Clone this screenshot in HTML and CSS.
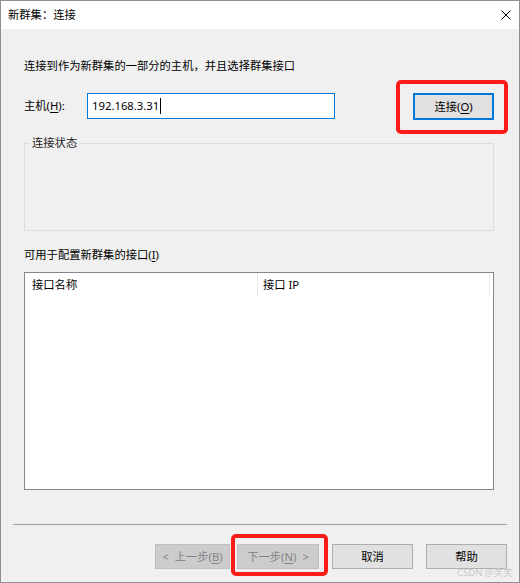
FILE: index.html
```html
<!DOCTYPE html>
<html lang="zh-CN">
<head>
<meta charset="utf-8">
<title>新群集：连接</title>
<link rel="stylesheet" href="styles.css">
</head>
<body>
<div class="window">
  <div class="titlebar">
    <span class="title">新群集：连接</span>
    <svg class="close" width="10" height="10" viewBox="0 0 10 10"><path d="M0.5 0.5 L9.5 9.5 M9.5 0.5 L0.5 9.5" stroke="#000" stroke-width="1" fill="none"/></svg>
  </div>
  <div class="content">
    <div class="intro">连接到作为新群集的一部分的主机，并且选择群集接口</div>
    <div class="host-row">
      <span class="host-label">主机(<u>H</u>):</span>
      <div class="textbox">192.168.3.31<span class="caret"></span></div>
      <div class="spacer"></div>
      <button class="btn btn-default">连接(<u>O</u>)</button>
    </div>
    <fieldset class="group">
      <legend>连接状态</legend>
    </fieldset>
    <div class="list-label">可用于配置新群集的接口(<u>I</u>)</div>
    <div class="listview">
      <div class="list-header">
        <div class="col col-name">接口名称</div>
        <div class="col col-ip">接口 IP</div>
      </div>
    </div>
  </div>
  <div class="footer">
    <div class="separator"></div>
    <div class="buttons">
      <button class="btn btn-disabled btn-back"><span class="arrow">&lt;</span>上一步(<u>B</u>)</button>
      <button class="btn btn-disabled btn-next">下一步(<u>N</u>)<span class="arrow arrow-r">&gt;</span></button>
      <button class="btn btn-normal">取消</button>
      <button class="btn btn-normal">帮助</button>
    </div>
  </div>
  <div class="mark mark-connect"></div>
  <div class="mark mark-next"></div>
  <div class="watermark">CSDN @笑笑</div>
</div>
</body>
</html>
```
FILE: styles.css
```css
html, body {
  margin: 0;
  padding: 0;
  background: #ffffff;
}
body {
  width: 520px;
  height: 583px;
  overflow: hidden;
}
.window {
  position: relative;
  box-sizing: border-box;
  width: 520px;
  height: 583px;
  border: 1px solid #8f8f8f;
  background: #f0f0f0;
  display: flex;
  flex-direction: column;
  font-family: "Noto Sans", "Noto Sans CJK SC", sans-serif;
  font-size: 11.3px;
  line-height: 16px;
  color: #000;
}
u {
  text-decoration: underline;
  text-underline-offset: 2px;
}
.titlebar {
  height: 28px;
  flex: none;
  background: #ffffff;
  display: flex;
  align-items: center;
  justify-content: space-between;
  padding: 0 8px 0 7px;
}
.title {
  font-size: 11.3px;
}
.close {
  display: block;
}
.content {
  flex: 1;
  display: flex;
  flex-direction: column;
  padding: 0 25px 0 23px;
}
.intro {
  margin-top: 29px;
  height: 16px;
}
.host-row {
  margin-top: 19px;
  display: flex;
  align-items: flex-start;
  height: 27px;
}
.host-label {
  width: 63px;
  flex: none;
  margin-top: 5px;
}
.textbox {
  box-sizing: border-box;
  width: 248px;
  height: 26px;
  background: #fff;
  border: 1px solid #0078d7;
  padding: 0 4px;
  display: flex;
  align-items: center;
  flex: none;
}
.caret {
  display: inline-block;
  width: 1px;
  height: 16px;
  background: #000;
  margin-left: 1px;
}
.spacer {
  flex: 1;
}
.btn {
  box-sizing: border-box;
  font-family: "Noto Sans", "Noto Sans CJK SC", sans-serif;
  font-size: 11.3px;
  line-height: 16px;
  color: #000;
  padding: 0;
  margin: 0;
  text-align: center;
}
.btn-default {
  width: 81px;
  height: 27px;
  background: #e1e1e1;
  border: 2px solid #0078d7;
}
.btn-normal {
  width: 81px;
  height: 25px;
  background: #e1e1e1;
  border: 1px solid #adadad;
}
.btn-disabled {
  height: 25px;
  background: #cccccc;
  border: 1px solid #bfbfbf;
  color: #838383;
}
.arrow {
  margin-right: 6px;
}
.arrow-r {
  margin-right: 0;
  margin-left: 6px;
}
.btn-back {
  width: 75px;
}
.btn-next {
  width: 82px;
}
.group {
  box-sizing: border-box;
  margin: 15px 0 0 0;
  padding: 0 0 0 5px;
  height: 96px;
  border: 1px solid #dcdcdc;
  min-width: 0;
}
.group legend {
  padding: 0 2px;
  line-height: 16px;
  color: #222;
}
.list-label {
  margin-top: 16px;
  height: 16px;
}
.listview {
  margin-top: 9px;
  box-sizing: border-box;
  height: 218px;
  background: #ffffff;
  border: 1px solid #828790;
}
.list-header {
  display: flex;
  height: 23px;
}
.col {
  box-sizing: border-box;
  height: 23px;
  border-right: 1px solid #e5e5e5;
  display: flex;
  align-items: center;
}
.col-name {
  width: 233px;
  padding-left: 7px;
}
.col-ip {
  width: 232px;
  padding-left: 5px;
}
.footer {
  flex: none;
  padding: 0 12px 13px 12px;
}
.separator {
  height: 1px;
  background: #a0a0a0;
}
.buttons {
  margin-top: 19px;
  display: flex;
  justify-content: flex-end;
  gap: 13px;
}
.btn-back {
  margin-right: -6px;
}
.mark {
  position: absolute;
  box-sizing: border-box;
  border: 4px solid #fb1b17;
  border-radius: 5px;
}
.mark-connect {
  left: 395px;
  top: 79px;
  width: 112px;
  height: 54px;
}
.mark-next {
  left: 230px;
  top: 533px;
  width: 97px;
  height: 42px;
}
.watermark {
  position: absolute;
  left: 456px;
  top: 565px;
  font-family: "Noto Sans", "Noto Sans CJK SC", sans-serif;
  font-size: 9.5px;
  line-height: 14px;
  color: #c4c4c4;
  text-shadow: 0 0 1px #ffffff;
}
```
